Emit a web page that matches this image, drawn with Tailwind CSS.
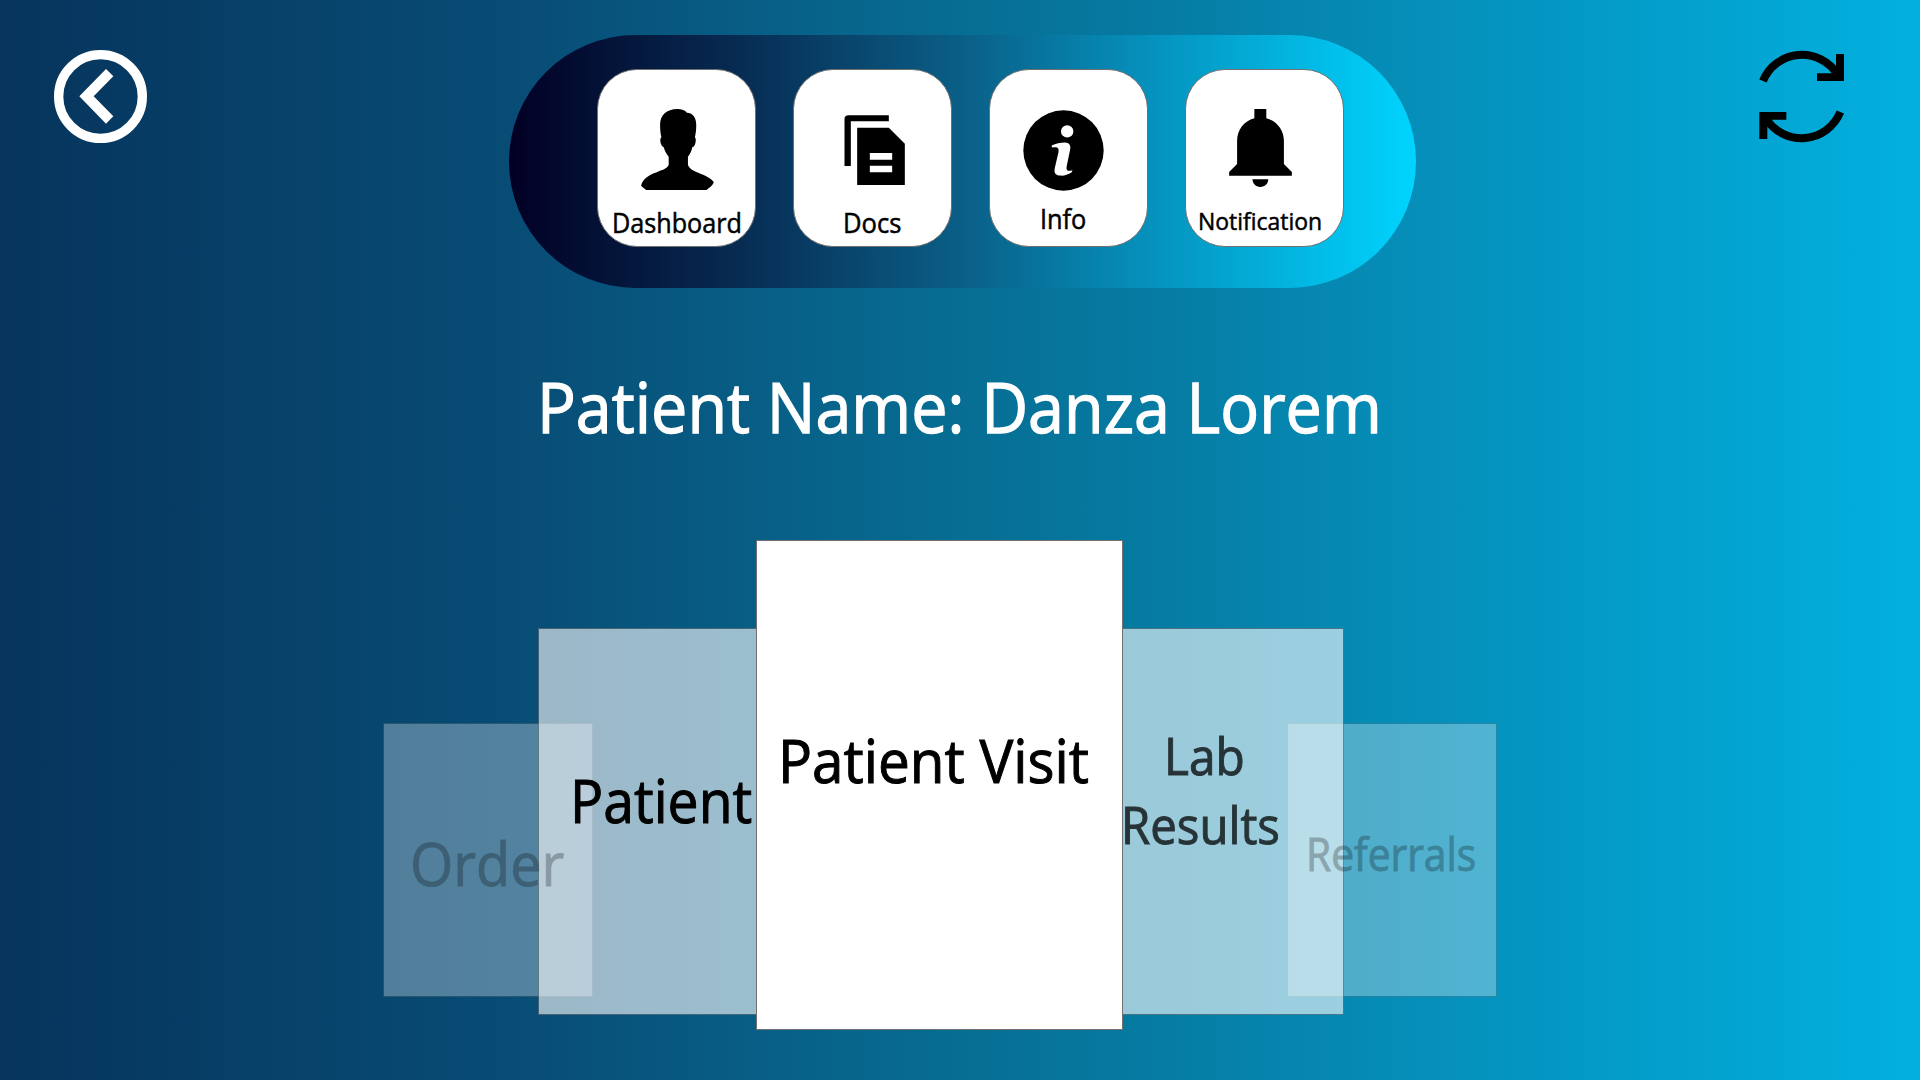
<!DOCTYPE html>
<html lang="en">
<head>
<meta charset="utf-8">
<title>Patient</title>
<script src="https://cdn.jsdelivr.net/npm/@tailwindcss/browser@4"></script>
</head>
<body class="bg-[#06345c]">
<main class="flex h-[1080px] w-[1920px] flex-col overflow-hidden bg-[linear-gradient(90deg,#06345c_0%,#084e77_28%,#077096_52%,#0590bb_75%,#02b0df_100%)] font-['Open_Sans','Noto_Sans',sans-serif] text-black">
  <header class="flex items-start pt-[35px] pl-[54px]">
    <button aria-label="Back" class="mt-[15px] shrink-0">
      <svg class="block h-[93px] w-[93px]" viewBox="72 60 279 279"><circle cx="211.5" cy="199.5" r="125.5" fill="none" stroke="#fff" stroke-width="28"/><path fill="#fff" d="M228 117 250 139 191 199 250 259 228 281 148 199Z"/></svg>
    </button>
    <nav class="ml-[362px] flex h-[253px] w-[907px] shrink-0 items-start gap-[37px] rounded-full bg-[linear-gradient(90deg,#020024_0%,#072b52_25%,#0a5f87_50%,#0590bb_70%,#00d4ff_100%)] pt-[34px] pl-[88px] [-webkit-text-stroke:0.5px_black]">
      <a class="flex h-[178px] w-[159px] flex-col items-start rounded-[40px] border border-[#707070] bg-white">
        <span class="h-[130px] pt-[39px] pl-[43px]"><svg class="block h-[81px] w-[73px]" viewBox="183 176 219 244"><path d="M293 176C305 176 315 180 321 187C340 188 349 203 349 225C349 240 347 252 345 261C349 265 348 275 345 283C343 289 340 291 337 291C335 302 330 312 324 320V345C330 358 340 362 355 368C378 377 398 387 402 397C398 408 390 412 380 420H198C192 414 186 412 183 407C186 388 205 375 228 367C248 359 260 357 266 345V320C259 311 253 300 251 291C246 290 243 285 241 275C240 268 241 264 244 261C241 250 240 238 240 222C241 195 258 176 293 176Z"/></svg></span>
        <span class="mt-[10px] ml-[14px] origin-left scale-x-[0.95] text-[26.5px] leading-none whitespace-nowrap">Dashboard</span>
      </a>
      <a class="flex h-[178px] w-[159px] flex-col items-start rounded-[40px] border border-[#707070] bg-white">
        <span class="h-[130px] pt-[45px] pl-[50px]"><svg class="block h-[70px] w-[61px]" viewBox="793 195 182 210"><path fill-rule="evenodd" d="M794 348V207Q794 196 806 196H927V214H813V348ZM832 233H927L975 281V405H832ZM870 309V329H937V309ZM870 347V367H937V347Z"/></svg></span>
        <span class="mt-[10px] ml-[49px] origin-left scale-x-[0.965] text-[26.5px] leading-none whitespace-nowrap">Docs</span>
      </a>
      <a class="flex h-[178px] w-[159px] flex-col items-start rounded-[40px] border border-[#707070] bg-white">
        <span class="h-[130px] pt-[40px] pl-[33px]"><svg class="block h-[81px] w-[81px]" viewBox="158 179 242 242"><circle cx="279" cy="300" r="120"/><circle cx="290" cy="243" r="18.5" fill="#fff"/><path fill="#fff" d="M244 285C255 279 270 276 283 276C297 277 301 284 299 296L289 345C286 360 290 363 306 359L303 366C292 373 280 376 270 375C254 374 250 366 253 352L264 305C266 291 261 288 244 291Z"/></svg></span>
        <span class="mt-[6px] ml-[50px] origin-left scale-x-[0.955] text-[26.5px] leading-none whitespace-nowrap">Info</span>
      </a>
      <a class="flex h-[178px] w-[159px] flex-col items-start rounded-[40px] border border-[#707070] bg-white">
        <span class="h-[130px] pt-[39px] pl-[43px]"><svg class="block h-[78px] w-[63px]" viewBox="776 176 189 235"><path d="M852 176H888V204C920 212 941 240 941 272V342L965 366V377H776V366L800 342V272C800 240 820 212 852 204ZM846 388H894C893 402 884 411 870 411S848 402 846 388Z"/></svg></span>
        <span class="mt-[9px] ml-[12px] origin-left scale-x-[0.955] text-[24px] leading-none whitespace-nowrap">Notification</span>
      </a>
    </nav>
    <button aria-label="Refresh" class="mt-[15px] ml-[343px] shrink-0">
      <svg class="block h-[93px] w-[85px]" viewBox="57 60 255 279"><g id="half"><path fill="none" stroke="#000" stroke-width="24" d="M69 153A126 126 0 0 1 292 133"/><path d="M288 72H312V153H231V130H288Z"/></g><use href="#half" transform="rotate(180 185 199.5)"/></svg>
    </button>
  </header>
  <h1 class="mt-[83px] pl-[537px] text-[70px] leading-none whitespace-nowrap text-white [-webkit-text-stroke:1.3px_white]"><span class="inline-block origin-left scale-x-[0.923]">Patient Name: Danza Lorem</span></h1>
  <section class="mt-[99px] flex items-start pl-[383px] leading-none whitespace-nowrap [-webkit-text-stroke:1px_black]">
    <article class="mt-[183px] h-[274px] w-[210px] shrink-0 border border-[#707070]/30 bg-white/30 bg-clip-padding pt-[109px] pl-[26px] text-[60px]"><span class="relative z-10 inline-block origin-left scale-x-[0.928] opacity-25">Order</span></article>
    <article class="relative mt-[88px] -ml-[55px] h-[387px] w-[306px] shrink-0 border border-[#707070]/60 bg-white/60 bg-clip-padding pt-[141px] pl-[31px] text-[60px]"><span class="inline-block origin-left scale-x-[0.921]">Patient</span></article>
    <article class="relative z-20 -ml-[88px] h-[490px] w-[367px] shrink-0 border border-[#707070] bg-white pt-[189px] pl-[21px] text-[60px]"><span class="inline-block origin-left scale-x-[0.944]">Patient Visit</span></article>
    <article class="relative mt-[88px] -ml-[85px] h-[387px] w-[306px] shrink-0 border border-[#707070]/60 bg-white/60 bg-clip-padding pt-[91px] pl-[82px] text-[52px] leading-[69px]"><div class="opacity-75"><div class="pl-[43px]"><span class="inline-block origin-left scale-x-[0.92]">Lab</span></div><div><span class="inline-block origin-left scale-x-[0.911]">Results</span></div></div></article>
    <article class="mt-[183px] -ml-[57px] h-[274px] w-[210px] shrink-0 border border-[#707070]/30 bg-white/30 bg-clip-padding pt-[107px] pl-[18px] text-[45px]"><span class="relative z-10 inline-block origin-left scale-x-[0.905] opacity-25">Referrals</span></article>
  </section>
</main>
</body>
</html>
